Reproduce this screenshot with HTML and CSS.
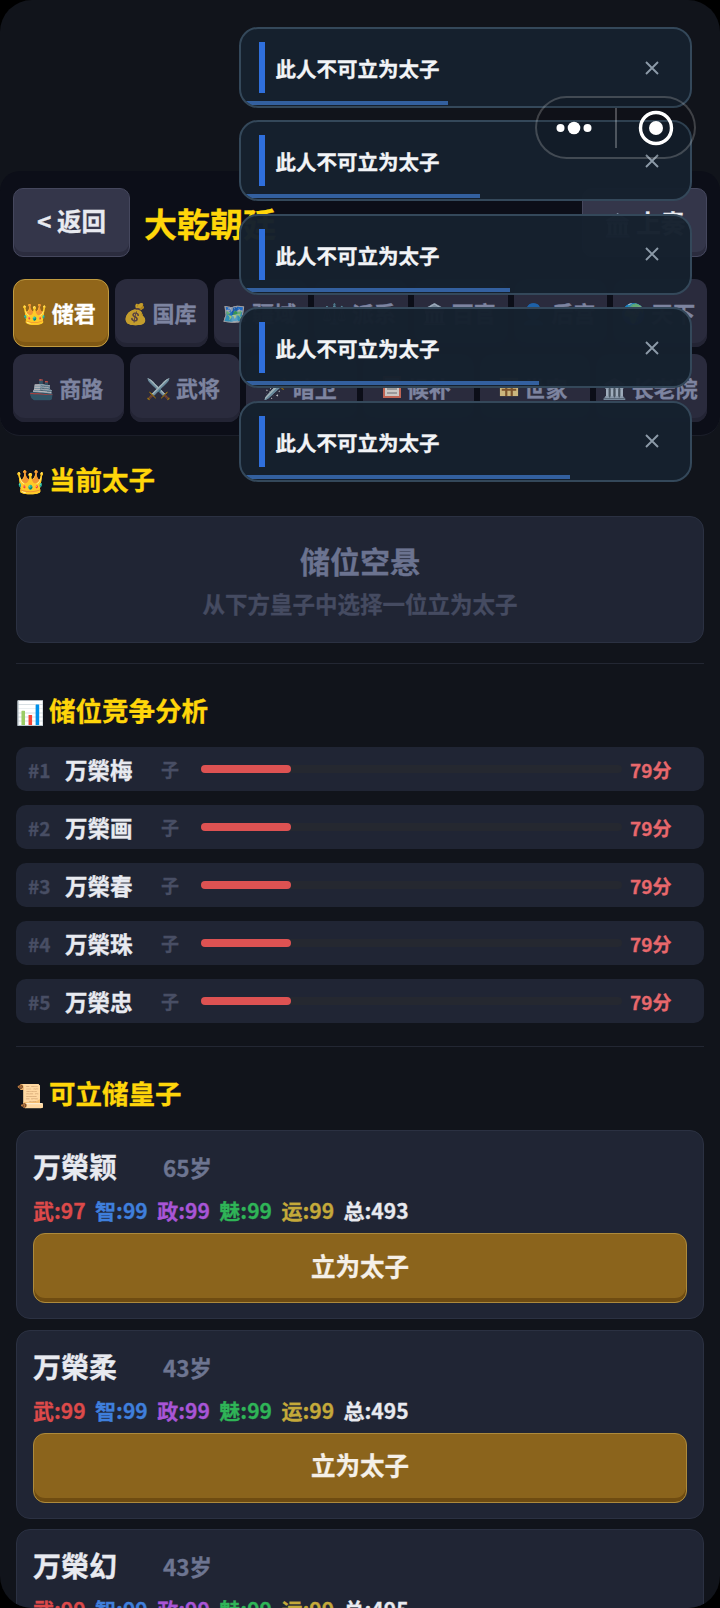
FILE: index.html
```html
<!DOCTYPE html>
<html lang="zh-CN">
<head>
  <meta charset="UTF-8">
  <meta name="viewport" content="width=device-width, initial-scale=1.0">
  <link rel="stylesheet" href="styles.css">
</head>
<body>
  <div class="screen">

    <!-- top bar and tabs -->
    <header class="panel">
      <div class="head-row">
        <button class="nav-btn back-btn">&lt; 返回</button>
        <h1 class="court-title">大乾朝廷</h1>
        <button class="nav-btn memo-btn"><span class="emo">🏛️</span> 上奏</button>
      </div>
      <div class="tab-row">
        <div class="tab active"><span class="emo">👑</span> 储君</div>
        <div class="tab"><span class="emo">💰</span> 国库</div>
        <div class="tab"><span class="emo">🗺️</span> 疆域</div>
        <div class="tab"><span class="emo">⚖️</span> 派系</div>
        <div class="tab"><span class="emo">🏛️</span> 百官</div>
        <div class="tab"><span class="emo">👤</span> 后宫</div>
        <div class="tab"><span class="emo">🌍</span> 天下</div>
      </div>
      <div class="tab-row">
        <div class="tab"><span class="emo">🚢</span> 商路</div>
        <div class="tab"><span class="emo">⚔️</span> 武将</div>
        <div class="tab"><span class="emo">🗡️</span> 暗卫</div>
        <div class="tab">
          <svg class="tab-icon" viewBox="0 0 20 22"><rect x="2" y="1" width="16" height="20" fill="#e8e4dc" stroke="#d9705a" stroke-width="2"/><path d="M5 9H15M5 13H15M5 17H15" stroke="#9a9a9a" stroke-width="1.6"/></svg>
          候补
        </div>
        <div class="tab">
          <svg class="tab-icon" viewBox="0 0 22 22"><rect x="1" y="1" width="20" height="20" fill="#e8cf8a"/><path d="M8 3V21M14 3V21M3 8H19M3 14H19" stroke="#8a5a2a" stroke-width="2.4"/></svg>
          世家
        </div>
        <div class="tab"><span class="emo">🏛️</span> 长老院</div>
      </div>
    </header>

    <main class="content">
      <h2 class="section-title first"><span class="emo">👑</span> 当前太子</h2>
      <div class="empty-card">
        <div class="empty-title">储位空悬</div>
        <div class="empty-sub">从下方皇子中选择一位立为太子</div>
      </div>

      <div class="divider"></div>

      <h2 class="section-title"><span class="emo">📊</span> 储位竞争分析</h2>
      <div class="rank-list">
        <div class="rank-row">
          <span class="rank-no">#1</span><span class="rank-name">万榮梅</span><span class="rank-role">子</span>
          <div class="rank-track"><div class="rank-fill" style="width: 21.3%"></div></div>
          <span class="rank-score">79分</span>
        </div>
        <div class="rank-row">
          <span class="rank-no">#2</span><span class="rank-name">万榮画</span><span class="rank-role">子</span>
          <div class="rank-track"><div class="rank-fill" style="width: 21.3%"></div></div>
          <span class="rank-score">79分</span>
        </div>
        <div class="rank-row">
          <span class="rank-no">#3</span><span class="rank-name">万榮春</span><span class="rank-role">子</span>
          <div class="rank-track"><div class="rank-fill" style="width: 21.3%"></div></div>
          <span class="rank-score">79分</span>
        </div>
        <div class="rank-row">
          <span class="rank-no">#4</span><span class="rank-name">万榮珠</span><span class="rank-role">子</span>
          <div class="rank-track"><div class="rank-fill" style="width: 21.3%"></div></div>
          <span class="rank-score">79分</span>
        </div>
        <div class="rank-row">
          <span class="rank-no">#5</span><span class="rank-name">万榮忠</span><span class="rank-role">子</span>
          <div class="rank-track"><div class="rank-fill" style="width: 21.3%"></div></div>
          <span class="rank-score">79分</span>
        </div>
      </div>

      <div class="divider lower"></div>

      <h2 class="section-title"><span class="emo">📜</span> 可立储皇子</h2>
      <div class="prince-list">
        <div class="prince-card">
          <div class="prince-head"><span class="prince-name">万榮颖</span><span class="prince-age">65岁</span></div>
          <div class="stats">
            <span class="st-wu">武:97</span><span class="st-zhi">智:99</span><span class="st-zheng">政:99</span><span class="st-mei">魅:99</span><span class="st-yun">运:99</span><span class="st-total">总:493</span>
          </div>
          <button class="appoint-btn">立为太子</button>
        </div>
        <div class="prince-card">
          <div class="prince-head"><span class="prince-name">万榮柔</span><span class="prince-age">43岁</span></div>
          <div class="stats">
            <span class="st-wu">武:99</span><span class="st-zhi">智:99</span><span class="st-zheng">政:99</span><span class="st-mei">魅:99</span><span class="st-yun">运:99</span><span class="st-total">总:495</span>
          </div>
          <button class="appoint-btn">立为太子</button>
        </div>
        <div class="prince-card">
          <div class="prince-head"><span class="prince-name">万榮幻</span><span class="prince-age">43岁</span></div>
          <div class="stats">
            <span class="st-wu">武:99</span><span class="st-zhi">智:99</span><span class="st-zheng">政:99</span><span class="st-mei">魅:99</span><span class="st-yun">运:99</span><span class="st-total">总:495</span>
          </div>
          <button class="appoint-btn">立为太子</button>
        </div>
      </div>
    </main>

    <!-- toasts lie over the page -->
    <div class="toast-stack">
      <div class="toast">
        <i class="toast-mark"></i><span class="toast-text">此人不可立为太子</span>
        <svg class="toast-close" viewBox="0 0 14 14"><path d="M1 1L13 13M13 1L1 13"/></svg>
        <div class="toast-progress" style="width: 45.4%"></div>
      </div>
      <div class="toast">
        <i class="toast-mark"></i><span class="toast-text">此人不可立为太子</span>
        <svg class="toast-close" viewBox="0 0 14 14"><path d="M1 1L13 13M13 1L1 13"/></svg>
        <div class="toast-progress" style="width: 52.6%"></div>
      </div>
      <div class="toast">
        <i class="toast-mark"></i><span class="toast-text">此人不可立为太子</span>
        <svg class="toast-close" viewBox="0 0 14 14"><path d="M1 1L13 13M13 1L1 13"/></svg>
        <div class="toast-progress" style="width: 59.2%"></div>
      </div>
      <div class="toast">
        <i class="toast-mark"></i><span class="toast-text">此人不可立为太子</span>
        <svg class="toast-close" viewBox="0 0 14 14"><path d="M1 1L13 13M13 1L1 13"/></svg>
        <div class="toast-progress" style="width: 65.8%"></div>
      </div>
      <div class="toast">
        <i class="toast-mark"></i><span class="toast-text">此人不可立为太子</span>
        <svg class="toast-close" viewBox="0 0 14 14"><path d="M1 1L13 13M13 1L1 13"/></svg>
        <div class="toast-progress" style="width: 72.6%"></div>
      </div>
    </div>

    <!-- mini program capsule -->
    <div class="capsule">
      <svg class="capsule-dots" viewBox="0 0 40 14"><circle cx="6.5" cy="7" r="4"/><circle cx="20" cy="7" r="6.3"/><circle cx="33.5" cy="7" r="4"/></svg>
      <i class="capsule-line"></i>
      <svg class="capsule-target" viewBox="0 0 36 36"><circle class="ring" cx="18" cy="18" r="15.5"/><circle cx="18" cy="18" r="7"/></svg>
    </div>
  </div>
</body>
</html>
```

FILE: styles.css
```css
* {
  box-sizing: border-box;
}
html, body {
  margin: 0;
  background: #000;
}
body {
  width: 720px;
  height: 1608px;
  overflow: hidden;
  font-family: "Noto Sans CJK SC", "Noto Sans", sans-serif;
  font-weight: 700;
  -webkit-text-stroke: 0.3px currentColor;
}
button {
  font-family: inherit;
  font-weight: 700;
}
.screen {
  position: relative;
  width: 720px;
  height: 1608px;
  padding-top: 171px;
  overflow: hidden;
  border-radius: 32px;
  background: #11141b;
}
.emo {
  font-weight: 400;
}

/* top bar and tabs */
.panel {
  padding: 17px 13px 13px;
  border-radius: 20px;
  border-bottom: 1px solid #1b1e29;
  background: #0c0e18;
}
.head-row {
  display: flex;
  align-items: center;
  height: 69px;
  margin-bottom: 22px;
}
.nav-btn {
  height: 69px;
  border: 1px solid #45475d;
  border-radius: 10px;
  background: #34364a;
  box-shadow: inset 0 -4px 0 #2b2c3e;
  color: #e8eaf0;
  font-size: 24.5px;
  white-space: nowrap;
}
.back-btn {
  width: 117px;
  padding: 0 0 4px;
}
.memo-btn {
  width: 125px;
  margin-left: auto;
  padding: 0;
}
.memo-btn .emo {
  font-size: 22px;
}
.court-title {
  margin: 0 0 0 14px;
  color: #ffd60a;
  font-size: 33px;
  line-height: 44px;
}
.tab-row {
  display: flex;
  gap: 6px;
  margin-top: 7px;
}
.tab {
  flex: 1 1 0;
  display: flex;
  align-items: center;
  justify-content: center;
  gap: 5px;
  height: 68px;
  padding: 0 4px 2px 0;
  border-radius: 12px;
  background: #2a2b3d;
  box-shadow: inset 0 -4px 0 #232434;
  color: #7d84a0;
  font-size: 22px;
  white-space: nowrap;
}
.tab .emo {
  font-size: 20px;
  opacity: 0.72;
}
.tab-icon {
  width: 20px;
  height: 22px;
  opacity: 0.85;
}
.tab.active {
  border: 1px solid #c09a40;
  background: #91661a;
  box-shadow: inset 0 -4px 0 #7f5814;
  color: #fff;
}
.tab.active .emo {
  opacity: 1;
}

/* sections */
.content {
  padding: 0 16px;
}
.section-title {
  height: 38px;
  margin: 27px 0 18px;
  color: #ffd60a;
  font-size: 26.5px;
  line-height: 37px;
}
.section-title.first {
  margin-top: 24px;
}
.section-title .emo {
  margin-right: -2px;
  font-size: 23px;
}
.divider {
  height: 1px;
  margin-top: 20px;
  background: #232733;
}
.divider.lower {
  margin-top: 23px;
}
.empty-card {
  display: flex;
  flex-direction: column;
  align-items: center;
  gap: 6px;
  padding: 22px 0 23px;
  border: 1px solid #2b3142;
  border-radius: 14px;
  background: #202534;
}
.empty-title {
  color: #6b7390;
  font-size: 30px;
  line-height: 42px;
}
.empty-sub {
  color: #454b61;
  font-size: 22.5px;
  line-height: 32px;
}

/* ranking */
.rank-list {
  display: flex;
  flex-direction: column;
  gap: 14px;
}
.rank-row {
  display: flex;
  align-items: center;
  height: 44px;
  padding-left: 12px;
  border-radius: 10px;
  background: #202534;
}
.rank-no {
  width: 37px;
  color: #484e64;
  font-size: 19px;
}
.rank-name {
  width: 96px;
  color: #e8eaf0;
  font-size: 22.5px;
}
.rank-role {
  width: 40px;
  color: #484e64;
  font-size: 18px;
}
.rank-track {
  width: 421px;
  height: 8px;
  margin-top: -1px;
  border-radius: 4px;
  background: #252830;
}
.rank-fill {
  height: 100%;
  border-radius: 4px;
  background: #dd5252;
}
.rank-score {
  margin-left: 8px;
  color: #e8686c;
  font-size: 19px;
}

/* prince cards */
.prince-list {
  display: flex;
  flex-direction: column;
  gap: 10.5px;
}
.prince-card {
  flex: none;
  padding: 17px 16px 15px;
  border: 1px solid #2b3142;
  border-radius: 14px;
  background: #202534;
}
.prince-head {
  display: flex;
  align-items: center;
  height: 40px;
  padding-bottom: 4px;
}
.prince-name {
  margin-right: 46px;
  color: #e8eaf0;
  font-size: 28px;
}
.prince-age {
  margin-top: 2px;
  color: #6d7591;
  font-size: 22.5px;
}
.stats {
  display: flex;
  gap: 9.5px;
  height: 30px;
  margin-top: 9px;
  font-size: 21px;
  line-height: 26px;
}
.st-wu { color: #dc4a4a; }
.st-zhi { color: #3f7fdc; }
.st-zheng { color: #a855d6; }
.st-mei { color: #2fb457; }
.st-yun { color: #c4a93a; }
.st-total { color: #e8eaf0; }
.appoint-btn {
  display: block;
  width: 100%;
  height: 70px;
  margin-top: 6px;
  padding: 0 0 6px;
  border: 1.5px solid #ad8a3c;
  border-radius: 12px;
  background: #8b641c;
  box-shadow: inset 0 -4px 0 #6f4c11;
  color: #f5f0e8;
  font-size: 24.5px;
}

/* toasts */
.toast-stack {
  position: absolute;
  top: 27px;
  left: 239px;
  display: flex;
  flex-direction: column;
  gap: 12.4px;
  width: 453px;
}
.toast {
  position: relative;
  display: flex;
  align-items: center;
  height: 81px;
  padding: 13px 31px 13px 18px;
  overflow: hidden;
  border: 2px solid #34485a;
  border-radius: 19px;
  background: rgba(21, 33, 46, 0.98);
}
.toast-mark {
  width: 5.5px;
  height: 51px;
  background: #2f6fdc;
}
.toast-text {
  flex: 1;
  margin-left: 11px;
  padding-top: 1px;
  color: #f2f4f7;
  font-size: 20.5px;
}
.toast-close {
  width: 14px;
  height: 14px;
  fill: none;
  stroke: #8c9aa8;
  stroke-width: 1.9;
}
.toast-progress {
  position: absolute;
  left: 3px;
  bottom: 1px;
  height: 4px;
  background: #33609f;
}

/* capsule */
.capsule {
  position: absolute;
  top: 96px;
  left: 535px;
  display: flex;
  align-items: center;
  width: 161px;
  height: 63px;
  border: 2px solid rgba(255, 255, 255, 0.2);
  border-radius: 32px;
  background: rgba(0, 0, 0, 0.1);
}
.capsule-dots {
  width: 40px;
  height: 14px;
  margin-left: 17px;
  fill: #fff;
}
.capsule-line {
  width: 2px;
  height: 40px;
  margin-left: 21px;
  background: rgba(255, 255, 255, 0.25);
}
.capsule-target {
  width: 36px;
  height: 36px;
  margin-left: 21px;
  fill: #fff;
}
.capsule-target .ring {
  fill: none;
  stroke: #fff;
  stroke-width: 3.4;
}
```
